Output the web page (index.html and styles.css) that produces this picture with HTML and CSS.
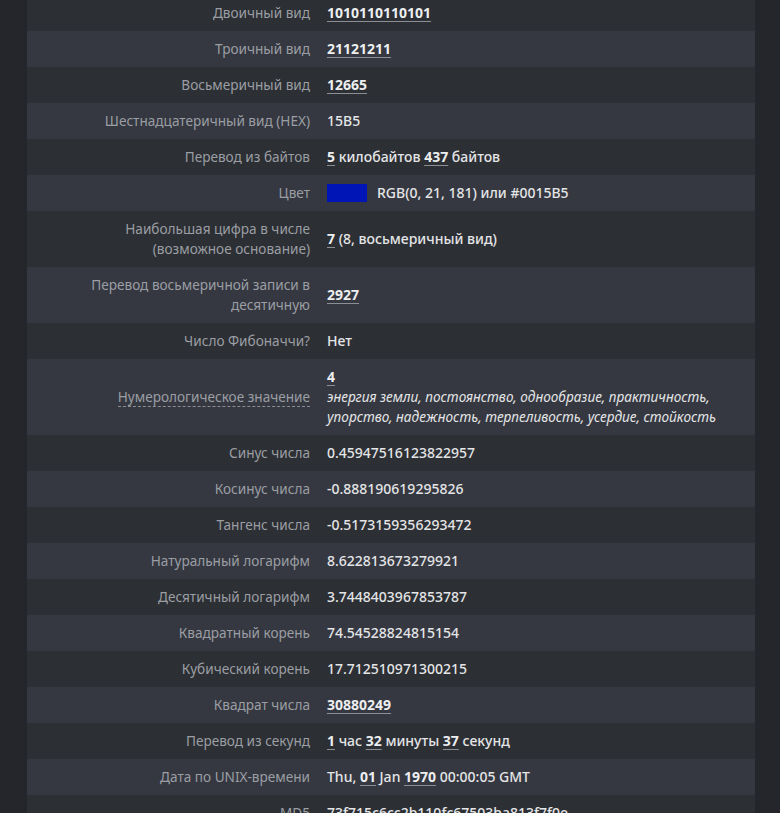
FILE: index.html
```html
<!DOCTYPE html>
<html lang="ru">
<head>
<meta charset="utf-8">
<link rel="stylesheet" href="styles.css">
</head>
<body>
<div class="page">
<table class="info">
<tr><th>Двоичный вид</th><td><a>1010110110101</a></td></tr>
<tr><th>Троичный вид</th><td><a>21121211</a></td></tr>
<tr><th>Восьмеричный вид</th><td><a>12665</a></td></tr>
<tr><th>Шестнадцатеричный вид (HEX)</th><td>15B5</td></tr>
<tr><th>Перевод из байтов</th><td><a>5</a> килобайтов <a>437</a> байтов</td></tr>
<tr><th>Цвет</th><td><span class="swatch"></span>RGB(0, 21, 181) или #0015B5</td></tr>
<tr><th>Наибольшая цифра в числе<br>(возможное основание)</th><td><a>7</a> (8, восьмеричный вид)</td></tr>
<tr><th>Перевод восьмеричной записи в<br>десятичную</th><td><a>2927</a></td></tr>
<tr><th>Число Фибоначчи?</th><td>Нет</td></tr>
<tr><th><span class="hint">Нумерологическое значение</span></th><td><a>4</a><br><em>энергия земли, постоянство, однообразие, практичность,<br>упорство, надежность, терпеливость, усердие, стойкость</em></td></tr>
<tr><th>Синус числа</th><td>0.45947516123822957</td></tr>
<tr><th>Косинус числа</th><td>-0.888190619295826</td></tr>
<tr><th>Тангенс числа</th><td>-0.5173159356293472</td></tr>
<tr><th>Натуральный логарифм</th><td>8.622813673279921</td></tr>
<tr><th>Десятичный логарифм</th><td>3.7448403967853787</td></tr>
<tr><th>Квадратный корень</th><td>74.54528824815154</td></tr>
<tr><th>Кубический корень</th><td>17.712510971300215</td></tr>
<tr><th>Квадрат числа</th><td><a>30880249</a></td></tr>
<tr><th>Перевод из секунд</th><td><a>1</a> час <a>32</a> минуты <a>37</a> секунд</td></tr>
<tr><th>Дата по UNIX-времени</th><td>Thu, <a>01</a> Jan <a>1970</a> 00:00:05 GMT</td></tr>
<tr><th>MD5</th><td>73f715c6cc2b110fc67503ba813f7f0e</td></tr>
</table>
</div>
</body>
</html>
```
FILE: styles.css
```css
html, body {
  margin: 0;
  padding: 0;
  background: #25262b;
  height: 100%;
  overflow: hidden;
}
.page {
  margin: -5px 25px 0 27px;
  width: 728px;
}
.info {
  width: 100%;
  border-collapse: collapse;
  font-family: "Noto Sans", sans-serif;
  font-size: 14px;
  line-height: 20px;
}
.info tr:nth-child(odd) { background: #2c2f33; }
.info tr:nth-child(even) { background: #353840; }
.info th {
  width: 275px;
  padding: 8px 8px 8px 8px;
  text-align: right;
  font-weight: 400;
  font-size: 13.6px;
  color: #9b9ea4;
  vertical-align: middle;
}
.info td {
  padding: 8px 8px 8px 9px;
  text-align: left;
  color: #e4e5e7;
  font-weight: 500;
  vertical-align: middle;
}
.info a {
  font-weight: 700;
  color: #eceef0;
  text-decoration: underline;
  text-decoration-color: #8b8e94;
  text-underline-offset: 3px;
}
.info em {
  font-style: italic;
  font-weight: 400;
  font-size: 13.6px;
}
.hint {
  border-bottom: 1px dashed #8b8e94;
}
.swatch {
  display: inline-block;
  width: 40px;
  height: 18px;
  background: #0015B5;
  vertical-align: -4px;
  margin-right: 10px;
}
```
